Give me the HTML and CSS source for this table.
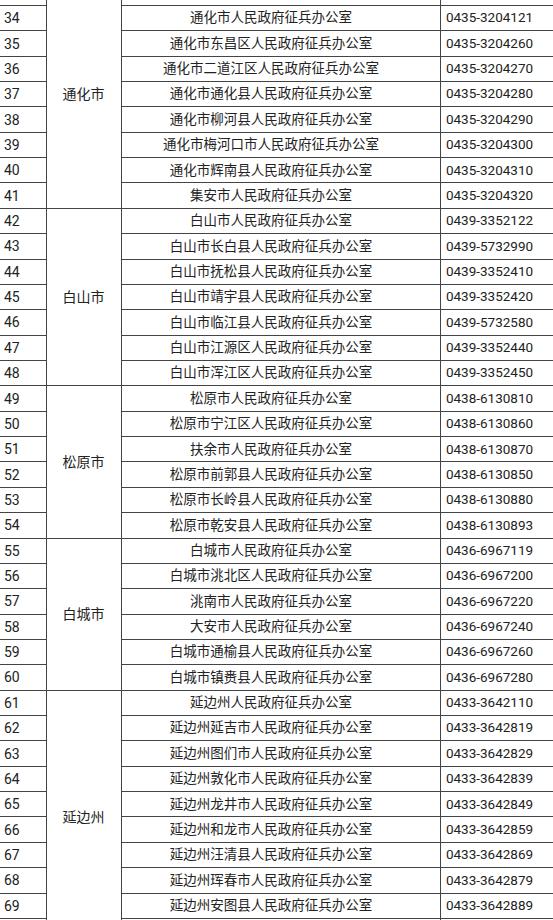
FILE: index.html
```html
<!DOCTYPE html>
<html lang="zh">
<head>
<meta charset="utf-8">
<link rel="stylesheet" href="styles.css">
</head>
<body>
<div class="viewport">
<table class="sheet">
<colgroup><col class="c-no"><col class="c-city"><col class="c-name"><col class="c-tel"></colgroup>
<tbody>
<tr><td class="no"></td><td class="city" rowspan="9">通化市</td><td class="name"></td><td class="tel"></td></tr>
<tr><td class="no">34</td><td class="name">通化市人民政府征兵办公室</td><td class="tel">0435-3204121</td></tr>
<tr><td class="no">35</td><td class="name">通化市东昌区人民政府征兵办公室</td><td class="tel">0435-3204260</td></tr>
<tr><td class="no">36</td><td class="name">通化市二道江区人民政府征兵办公室</td><td class="tel">0435-3204270</td></tr>
<tr><td class="no">37</td><td class="name">通化市通化县人民政府征兵办公室</td><td class="tel">0435-3204280</td></tr>
<tr><td class="no">38</td><td class="name">通化市柳河县人民政府征兵办公室</td><td class="tel">0435-3204290</td></tr>
<tr><td class="no">39</td><td class="name">通化市梅河口市人民政府征兵办公室</td><td class="tel">0435-3204300</td></tr>
<tr><td class="no">40</td><td class="name">通化市辉南县人民政府征兵办公室</td><td class="tel">0435-3204310</td></tr>
<tr><td class="no">41</td><td class="name">集安市人民政府征兵办公室</td><td class="tel">0435-3204320</td></tr>
<tr><td class="no">42</td><td class="city" rowspan="7">白山市</td><td class="name">白山市人民政府征兵办公室</td><td class="tel">0439-3352122</td></tr>
<tr><td class="no">43</td><td class="name">白山市长白县人民政府征兵办公室</td><td class="tel">0439-5732990</td></tr>
<tr><td class="no">44</td><td class="name">白山市抚松县人民政府征兵办公室</td><td class="tel">0439-3352410</td></tr>
<tr><td class="no">45</td><td class="name">白山市靖宇县人民政府征兵办公室</td><td class="tel">0439-3352420</td></tr>
<tr><td class="no">46</td><td class="name">白山市临江县人民政府征兵办公室</td><td class="tel">0439-5732580</td></tr>
<tr><td class="no">47</td><td class="name">白山市江源区人民政府征兵办公室</td><td class="tel">0439-3352440</td></tr>
<tr><td class="no">48</td><td class="name">白山市浑江区人民政府征兵办公室</td><td class="tel">0439-3352450</td></tr>
<tr><td class="no">49</td><td class="city" rowspan="6">松原市</td><td class="name">松原市人民政府征兵办公室</td><td class="tel">0438-6130810</td></tr>
<tr><td class="no">50</td><td class="name">松原市宁江区人民政府征兵办公室</td><td class="tel">0438-6130860</td></tr>
<tr><td class="no">51</td><td class="name">扶余市人民政府征兵办公室</td><td class="tel">0438-6130870</td></tr>
<tr><td class="no">52</td><td class="name">松原市前郭县人民政府征兵办公室</td><td class="tel">0438-6130850</td></tr>
<tr><td class="no">53</td><td class="name">松原市长岭县人民政府征兵办公室</td><td class="tel">0438-6130880</td></tr>
<tr><td class="no">54</td><td class="name">松原市乾安县人民政府征兵办公室</td><td class="tel">0438-6130893</td></tr>
<tr><td class="no">55</td><td class="city" rowspan="6">白城市</td><td class="name">白城市人民政府征兵办公室</td><td class="tel">0436-6967119</td></tr>
<tr><td class="no">56</td><td class="name">白城市洮北区人民政府征兵办公室</td><td class="tel">0436-6967200</td></tr>
<tr><td class="no">57</td><td class="name">洮南市人民政府征兵办公室</td><td class="tel">0436-6967220</td></tr>
<tr><td class="no">58</td><td class="name">大安市人民政府征兵办公室</td><td class="tel">0436-6967240</td></tr>
<tr><td class="no">59</td><td class="name">白城市通榆县人民政府征兵办公室</td><td class="tel">0436-6967260</td></tr>
<tr><td class="no">60</td><td class="name">白城市镇赉县人民政府征兵办公室</td><td class="tel">0436-6967280</td></tr>
<tr><td class="no">61</td><td class="city" rowspan="10">延边州</td><td class="name">延边州人民政府征兵办公室</td><td class="tel">0433-3642110</td></tr>
<tr><td class="no">62</td><td class="name">延边州延吉市人民政府征兵办公室</td><td class="tel">0433-3642819</td></tr>
<tr><td class="no">63</td><td class="name">延边州图们市人民政府征兵办公室</td><td class="tel">0433-3642829</td></tr>
<tr><td class="no">64</td><td class="name">延边州敦化市人民政府征兵办公室</td><td class="tel">0433-3642839</td></tr>
<tr><td class="no">65</td><td class="name">延边州龙井市人民政府征兵办公室</td><td class="tel">0433-3642849</td></tr>
<tr><td class="no">66</td><td class="name">延边州和龙市人民政府征兵办公室</td><td class="tel">0433-3642859</td></tr>
<tr><td class="no">67</td><td class="name">延边州汪清县人民政府征兵办公室</td><td class="tel">0433-3642869</td></tr>
<tr><td class="no">68</td><td class="name">延边州珲春市人民政府征兵办公室</td><td class="tel">0433-3642879</td></tr>
<tr><td class="no">69</td><td class="name">延边州安图县人民政府征兵办公室</td><td class="tel">0433-3642889</td></tr>
<tr><td class="no"></td><td class="name"></td><td class="tel"></td></tr>
</tbody>
</table>
</div>
</body>
</html>
```

FILE: styles.css
```css
html, body {
  margin: 0;
  padding: 0;
  background: #fff;
}
.viewport {
  width: 553px;
  height: 920px;
  overflow: hidden;
}
.sheet {
  width: 553px;
  margin-top: -20.4px;
  border-collapse: collapse;
  table-layout: fixed;
  font-family: Roboto, "Noto Sans CJK SC", sans-serif;
  font-size: 13.5px;
  color: #222;
}
.c-no { width: 46px; }
.c-city { width: 75px; }
.c-name { width: 319px; }
.c-tel { width: 113px; }
.sheet td {
  height: 25.36px;
  padding: 0;
  border: 1px solid #444;
  line-height: 1;
  white-space: nowrap;
  box-sizing: border-box;
}
.sheet td.no {
  border-left: none;
  padding-left: 4px;
  text-align: left;
  font-size: 14px;
}
.sheet td.city {
  text-align: center;
  font-size: 14px;
}
.sheet td.name {
  text-align: center;
  padding-right: 19px;
}
.sheet td.tel {
  text-align: center;
  padding-right: 14px;
}
```
